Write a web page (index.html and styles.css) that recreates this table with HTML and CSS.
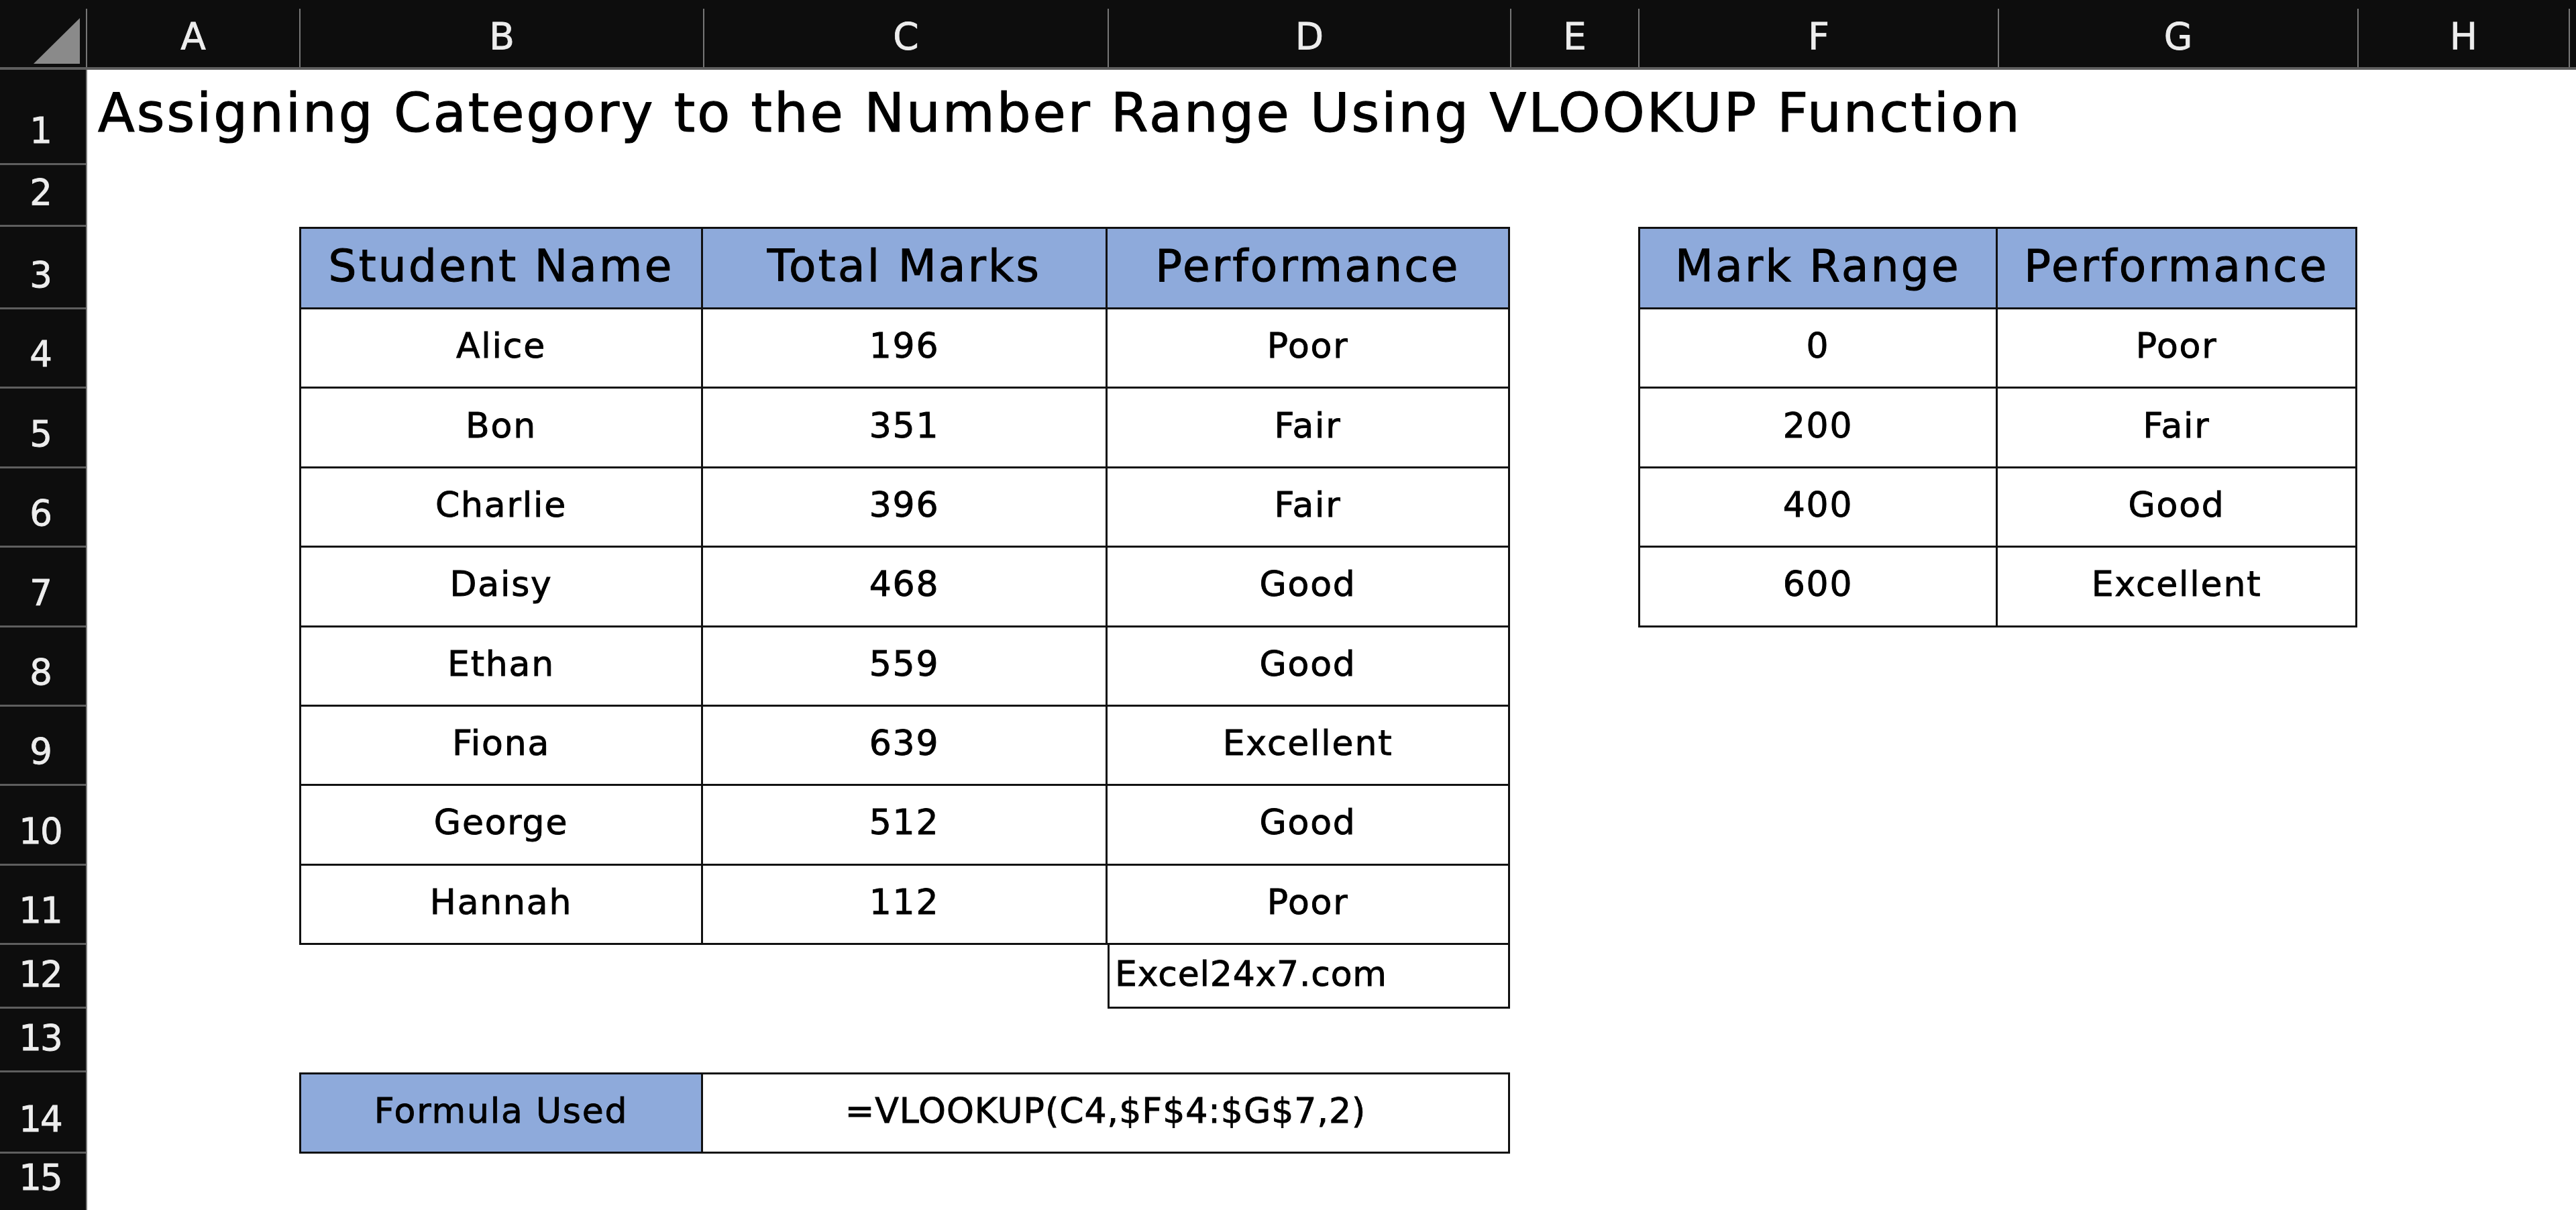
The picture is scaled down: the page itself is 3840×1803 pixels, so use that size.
FILE: index.html
```html
<!DOCTYPE html>
<html lang="en">
<head>
<meta charset="utf-8">
<title>Assigning Category to the Number Range Using VLOOKUP Function</title>
<link rel="stylesheet" href="styles.css">
</head>
<body>
<div class="sheet">
  <div class="colbar">
    <div class="corner">
      <svg class="corner-icon" viewBox="0 0 128 87" width="128" height="87"><polygon points="50,82 119,82 119,14" fill="#8a8a8a"/></svg>
    </div>
    <div class="colhead">A</div>
    <div class="colhead">B</div>
    <div class="colhead">C</div>
    <div class="colhead">D</div>
    <div class="colhead">E</div>
    <div class="colhead">F</div>
    <div class="colhead">G</div>
    <div class="colhead">H</div>
    <div class="colhead"></div>
  </div>

  <div class="rowbar">
    <div class="rowhead">1</div>
    <div class="rowhead">2</div>
    <div class="rowhead">3</div>
    <div class="rowhead">4</div>
    <div class="rowhead">5</div>
    <div class="rowhead">6</div>
    <div class="rowhead">7</div>
    <div class="rowhead">8</div>
    <div class="rowhead">9</div>
    <div class="rowhead">10</div>
    <div class="rowhead">11</div>
    <div class="rowhead">12</div>
    <div class="rowhead">13</div>
    <div class="rowhead">14</div>
    <div class="rowhead">15</div>
  </div>

  <div class="cells">
    <div class="title">Assigning Category to the Number Range Using VLOOKUP Function</div>

    <div class="tbl students">
      <div class="cell th">Student Name</div>
      <div class="cell th">Total Marks</div>
      <div class="cell th">Performance</div>

      <div class="cell">Alice</div><div class="cell">196</div><div class="cell">Poor</div>
      <div class="cell">Bon</div><div class="cell">351</div><div class="cell">Fair</div>
      <div class="cell">Charlie</div><div class="cell">396</div><div class="cell">Fair</div>
      <div class="cell">Daisy</div><div class="cell">468</div><div class="cell">Good</div>
      <div class="cell">Ethan</div><div class="cell">559</div><div class="cell">Good</div>
      <div class="cell">Fiona</div><div class="cell">639</div><div class="cell">Excellent</div>
      <div class="cell">George</div><div class="cell">512</div><div class="cell">Good</div>
      <div class="cell">Hannah</div><div class="cell">112</div><div class="cell">Poor</div>
    </div>

    <div class="tbl ranges">
      <div class="cell th">Mark Range</div>
      <div class="cell th">Performance</div>
      <div class="cell">0</div><div class="cell">Poor</div>
      <div class="cell">200</div><div class="cell">Fair</div>
      <div class="cell">400</div><div class="cell">Good</div>
      <div class="cell">600</div><div class="cell">Excellent</div>
    </div>

    <div class="site">Excel24x7.com</div>

    <div class="formula">
      <div class="cell fl-label">Formula Used</div>
      <div class="cell fl-value">=VLOOKUP(C4,$F$4:$G$7,2)</div>
    </div>
  </div>
</div>
</body>
</html>
```

FILE: styles.css
```css
* {
  box-sizing: border-box;
}

html, body {
  margin: 0;
  padding: 0;
  background: #ffffff;
}

body {
  width: 3840px;
  height: 1803px;
  overflow: hidden;
  font-family: "DejaVu Sans", "Liberation Sans", sans-serif;
  color: #000000;
}

.sheet {
  --rows: 142px 92px 123px repeat(8, 118.375px) 95px 95px 121px 1fr;
  display: grid;
  grid-template-columns: 130px 1fr;
  grid-template-rows: 104px 1fr;
  width: 3840px;
  height: 1803px;
}

/* column header bar */
.colbar {
  grid-column: 1 / -1;
  grid-row: 1;
  display: grid;
  grid-template-columns: 128px 318px 602px 603px 600px 191px 536px 536px 315px 1fr;
  background: #0d0d0d;
  padding-top: 13px;
  border-bottom: 4px solid #5e5e5e;
}

.corner {
  display: flex;
}

.corner-icon {
  display: block;
}

.colhead {
  border-left: 2px solid #767676;
  display: flex;
  align-items: center;
  justify-content: center;
  padding-bottom: 5px;
  color: #ededed;
  font-size: 55px;
  -webkit-text-stroke: 0.8px #ededed;
}

/* row header bar */
.rowbar {
  grid-column: 1;
  grid-row: 2;
  display: grid;
  grid-template-rows: var(--rows);
  background: #0d0d0d;
  border-right: 2px solid #7a7a7a;
}

.rowhead {
  display: flex;
  align-items: flex-end;
  justify-content: center;
  padding-right: 8px;
  padding-bottom: 18px;
  border-bottom: 3px solid #5e5e5e;
  color: #ededed;
  font-size: 53px;
  letter-spacing: -2px;
  -webkit-text-stroke: 0.8px #ededed;
}

.rowhead:last-child {
  border-bottom: none;
}

/* worksheet cells */
.cells {
  grid-column: 2;
  grid-row: 2;
  display: grid;
  grid-template-columns: 316px 602px 603px 600px 191px 536px 536px 1fr;
  grid-template-rows: var(--rows);
}

.title {
  grid-column: 1 / -1;
  grid-row: 1;
  display: flex;
  align-items: center;
  padding-left: 16px;
  padding-bottom: 13px;
  font-size: 80px;
  letter-spacing: 3px;
  white-space: nowrap;
  -webkit-text-stroke: 1.2px #000000;
}

.tbl {
  display: grid;
  border-top: 3px solid #111111;
  border-left: 3px solid #111111;
}

.students {
  grid-column: 2 / 5;
  grid-row: 3 / 12;
  grid-template-columns: 599fr 603fr 600fr;
  grid-template-rows: 120fr repeat(8, 118.375fr);
}

.ranges {
  grid-column: 6 / 8;
  grid-row: 3 / 8;
  grid-template-columns: 533fr 536fr;
  grid-template-rows: 120fr repeat(4, 118.375fr);
}

.cell {
  display: flex;
  align-items: center;
  justify-content: center;
  border-right: 3px solid #111111;
  border-bottom: 3px solid #111111;
  padding-bottom: 7px;
  font-size: 52px;
  letter-spacing: 1.8px;
  white-space: nowrap;
  -webkit-text-stroke: 0.9px #000000;
}

.th {
  background: #8eaadb;
  font-size: 66px;
  letter-spacing: 3.3px;
  padding-bottom: 6px;
  -webkit-text-stroke: 1.1px #000000;
}

.site {
  grid-column: 4;
  grid-row: 12;
  display: flex;
  align-items: center;
  padding-left: 8px;
  padding-bottom: 6px;
  border-left: 3px solid #111111;
  border-right: 3px solid #111111;
  border-bottom: 3px solid #111111;
  font-size: 52px;
  letter-spacing: 0.8px;
  -webkit-text-stroke: 0.9px #000000;
}

.formula {
  grid-column: 2 / 5;
  grid-row: 14;
  display: grid;
  grid-template-columns: 599px 1fr;
  border: 3px solid #111111;
}

.formula .cell {
  border-bottom: none;
}

.fl-label {
  background: #8eaadb;
}

.fl-value {
  letter-spacing: 1px;
}

.formula .fl-value {
  border-right: none;
}
```
